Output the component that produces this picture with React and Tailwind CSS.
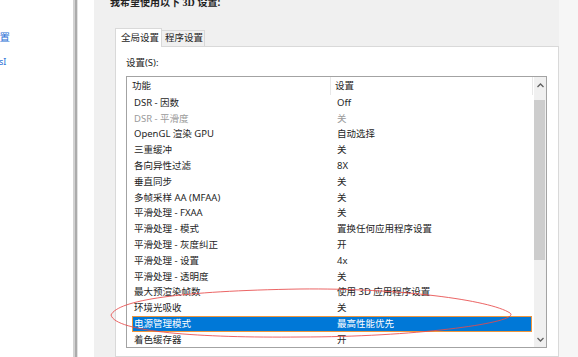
const rows = [
  ['DSR - 因数', 'Off'],
  ['DSR - 平滑度', '关', 'disabled'],
  ['OpenGL 渲染 GPU', '自动选择'],
  ['三重缓冲', '关'],
  ['各向异性过滤', '8X'],
  ['垂直同步', '关'],
  ['多帧采样 AA (MFAA)', '关'],
  ['平滑处理 - FXAA', '关'],
  ['平滑处理 - 模式', '置换任何应用程序设置'],
  ['平滑处理 - 灰度纠正', '开'],
  ['平滑处理 - 设置', '4x'],
  ['平滑处理 - 透明度', '关'],
  ['最大预渲染帧数', '使用 3D 应用程序设置'],
  ['环境光吸收', '关'],
  ['电源管理模式', '最高性能优先', 'selected'],
  ['着色缓存器', '开']
]

function Chevron({ up }) {
  return (
    <svg width="7" height="5" viewBox="0 0 7 5">
      <polyline
        points={up ? '0.5,4 3.5,1 6.5,4' : '0.5,1 3.5,4 6.5,1'}
        fill="none"
        stroke="#606060"
        strokeWidth="1.3"
      />
    </svg>
  )
}

function App() {
  return (
    <div
      className="relative flex h-[357px] w-[578px] overflow-hidden bg-white text-[#1e1e1e]"
      style={{ fontFamily: '"Noto Sans", "Noto Sans CJK SC", sans-serif' }}
    >
      {/* left nav, mostly cut off */}
      <div className="w-[73px] shrink-0 overflow-hidden bg-white text-[#2a6fd6]">
        <div className="mt-[30px] -ml-[11px] whitespace-nowrap text-[10.5px] leading-[14px]">
          设置
        </div>
        <div className="mt-[12px] -ml-[1px] whitespace-nowrap text-[9px] leading-[12px]">
          sI
        </div>
      </div>

      {/* splitter */}
      <div className="w-[5px] shrink-0 border-l-2 border-r border-l-[#d2d2d2] border-r-[#e2e2e2] bg-[#ababab]" />
      <div className="w-[16px] shrink-0 bg-white" />

      {/* main content */}
      <div className="flex w-[465px] shrink-0 flex-col bg-[#f0f0f0]">
        <div className="-mt-[4px] pl-[16px] text-[10px] font-bold leading-[12px] text-[#222]">
          我希望使用以下 <span style={{ fontFamily: '"Liberation Serif", serif' }}>3D</span> 设置:
        </div>

        <div className="mt-[19px] flex items-end pl-[21px] text-[9.5px]">
          <div className="relative z-10 -mb-px flex h-[19px] w-[47px] items-center border border-b-0 border-[#d9d9d9] bg-white pl-[5px]">
            全局设置
          </div>
          <div className="flex h-[16px] w-[43px] items-center border border-b-0 border-l-0 border-[#d9d9d9] bg-[#f0f0f0] pl-[3px]">
            程序设置
          </div>
        </div>

        <div className="ml-[21px] flex-1 border border-[#d9d9d9] bg-white pl-[10px] pt-[10px]">
          <div className="text-[9.5px] leading-[12px]">设置(S):</div>

          <div className="mt-[7px] flex h-[272px] w-[421px] border border-[#a3a3a3] bg-white text-[9.5px]">
            <div className="w-[407px] overflow-hidden">
              <div className="flex h-[18px] items-center">
                <div className="flex h-full w-[204px] items-center border-r border-[#e8e8e8] pl-[5px]">
                  功能
                </div>
                <div className="flex h-full w-[202px] items-center border-r border-[#e8e8e8] pl-[4px]">
                  设置
                </div>
              </div>
              <div className="pl-[5px]">
                {rows.map(([name, value, state]) => (
                  <div
                    key={name}
                    className={
                      state === 'selected'
                        ? 'flex h-[15.8px] w-[400px] items-center border border-[#f0963c] bg-[#0078d7] text-white'
                        : state === 'disabled'
                          ? 'flex h-[15.8px] w-[400px] items-center border border-transparent text-[#9a9a9a]'
                          : 'flex h-[15.8px] w-[400px] items-center border border-transparent'
                    }
                  >
                    <div className="w-[204px] whitespace-nowrap pl-[1px]">{name}</div>
                    <div className="whitespace-nowrap">{value}</div>
                  </div>
                ))}
              </div>
            </div>

            {/* scrollbar */}
            <div className="flex w-[12px] flex-col bg-[#f0f0f0]">
              <div className="flex h-[23px] items-start justify-center pt-[6px]">
                <Chevron up />
              </div>
              <div className="h-[160px] w-[11px] bg-[#cdcdcd]" />
              <div className="flex-1" />
              <div className="flex h-[14px] items-center justify-center pb-[2px]">
                <Chevron />
              </div>
            </div>
          </div>
        </div>
      </div>

      <div className="flex-1 bg-[#f6f6f6]" />

      {/* red hand-drawn mark */}
      <svg
        className="pointer-events-none absolute left-0 top-0"
        width="578"
        height="357"
        viewBox="0 0 578 357"
      >
        <path
          d="M 111 315 C 118 300, 180 291, 300 289 C 400 288, 490 300, 510 313 C 522 322, 420 337, 300 337 C 200 338, 115 332, 111 315"
          fill="none"
          stroke="#e84a4a"
          strokeOpacity="0.85"
          strokeWidth="1"
        />
      </svg>
    </div>
  )
}

export default App
